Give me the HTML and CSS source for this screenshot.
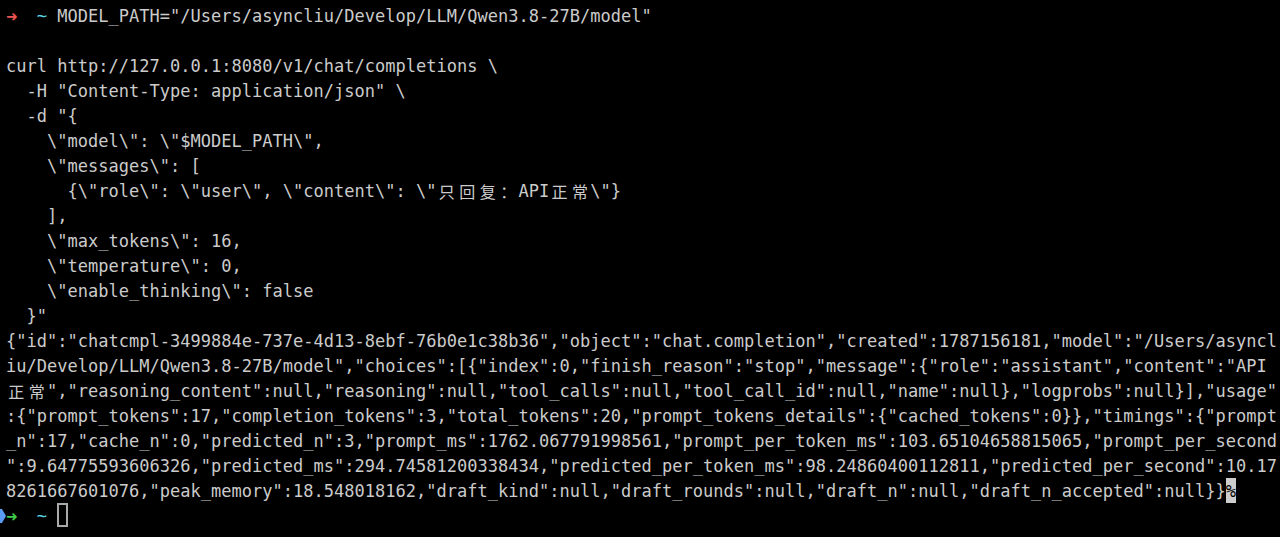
FILE: index.html
```html
<!DOCTYPE html>
<html lang="zh">
<head>
<meta charset="utf-8">
<title>Terminal</title>
<link rel="stylesheet" href="styles.css">
</head>
<body>
<div class="term">
  <div class="row"><span class="gut"></span><span class="line"><span class="cell arrow red">➜</span>  <span class="tilde">~</span> MODEL_PATH="/Users/asyncliu/Develop/LLM/Qwen3.8-27B/model"</span></div>
  <div class="row"><span class="gut"></span><span class="line"> </span></div>
  <div class="row"><span class="gut"></span><span class="line">curl http://127.0.0.1:8080/v1/chat/completions \</span></div>
  <div class="row"><span class="gut"></span><span class="line">  -H "Content-Type: application/json" \</span></div>
  <div class="row"><span class="gut"></span><span class="line">  -d "{</span></div>
  <div class="row"><span class="gut"></span><span class="line">    \"model\": \"$MODEL_PATH\",</span></div>
  <div class="row"><span class="gut"></span><span class="line">    \"messages\": [</span></div>
  <div class="row"><span class="gut"></span><span class="line">      {\"role\": \"user\", \"content\": \"<span class="wide">只</span><span class="wide">回</span><span class="wide">复</span><span class="wide">：</span>API<span class="wide">正</span><span class="wide">常</span>\"}</span></div>
  <div class="row"><span class="gut"></span><span class="line">    ],</span></div>
  <div class="row"><span class="gut"></span><span class="line">    \"max_tokens\": 16,</span></div>
  <div class="row"><span class="gut"></span><span class="line">    \"temperature\": 0,</span></div>
  <div class="row"><span class="gut"></span><span class="line">    \"enable_thinking\": false</span></div>
  <div class="row"><span class="gut"></span><span class="line">  }"</span></div>
  <div class="row"><span class="gut"></span><span class="line">{"id":"chatcmpl-3499884e-737e-4d13-8ebf-76b0e1c38b36","object":"chat.completion","created":1787156181,"model":"/Users/asyncl</span></div>
  <div class="row"><span class="gut"></span><span class="line">iu/Develop/LLM/Qwen3.8-27B/model","choices":[{"index":0,"finish_reason":"stop","message":{"role":"assistant","content":"API</span></div>
  <div class="row"><span class="gut"></span><span class="line"><span class="wide">正</span><span class="wide">常</span>","reasoning_content":null,"reasoning":null,"tool_calls":null,"tool_call_id":null,"name":null},"logprobs":null}],"usage"</span></div>
  <div class="row"><span class="gut"></span><span class="line">:{"prompt_tokens":17,"completion_tokens":3,"total_tokens":20,"prompt_tokens_details":{"cached_tokens":0}},"timings":{"prompt</span></div>
  <div class="row"><span class="gut"></span><span class="line">_n":17,"cache_n":0,"predicted_n":3,"prompt_ms":1762.067791998561,"prompt_per_token_ms":103.65104658815065,"prompt_per_second</span></div>
  <div class="row"><span class="gut"></span><span class="line">":9.64775593606326,"predicted_ms":294.74581200338434,"predicted_per_token_ms":98.24860400112811,"predicted_per_second":10.17</span></div>
  <div class="row"><span class="gut"></span><span class="line">8261667601076,"peak_memory":18.548018162,"draft_kind":null,"draft_rounds":null,"draft_n":null,"draft_n_accepted":null}}<span class="cell eol">%</span></span></div>
  <div class="row"><span class="gut"><svg class="mark" width="6" height="14" viewBox="0 0 6 14"><path d="M0 0 H2 L6 7 L2 14 H0 Z" fill="#5b9cf2"/></svg></span><span class="line"><span class="cell arrow green">➜</span>  <span class="tilde">~</span> <span class="cell cursor"></span></span></div>
</div>
</body>
</html>
```
FILE: styles.css
```css
html, body {
  margin: 0;
  padding: 0;
  background: #000;
  height: 100%;
  overflow: hidden;
}

.term {
  padding-top: 3px;
  display: flex;
  flex-direction: column;
  font-family: "DejaVu Sans Mono", "Noto Sans CJK SC", monospace;
  font-size: 17px;
  letter-spacing: 0.016px;
  color: #cbcbcb;
}

.row {
  display: flex;
  align-items: center;
  height: 25px;
}

.gut {
  width: 6px;
  flex: 0 0 6px;
  display: flex;
  align-items: center;
}

.line {
  white-space: pre;
  line-height: 26px;
  height: 25px;
}

.cell {
  display: inline-block;
  width: 10.25px;
  height: 25px;
  vertical-align: top;
  text-align: center;
}

.wide {
  display: inline-block;
  width: 20.5px;
  text-align: center;
  font-family: "Noto Sans CJK SC", sans-serif;
  font-size: 16px;
  vertical-align: top;
}

.arrow {
  font-family: "DejaVu Sans", sans-serif;
  font-size: 14px;
  font-weight: bold;
  text-align: left;
}

.red { color: #ee5552; }
.green { color: #3fcf4a; }
.tilde { color: #5ad3e4; }

.eol {
  background: #cdcdcd;
  color: #000;
}

.cursor {
  box-sizing: border-box;
  border: 2px solid #a9a9a9;
  height: 24px;
  margin-top: 0;
}

.mark {
  display: block;
}
```
